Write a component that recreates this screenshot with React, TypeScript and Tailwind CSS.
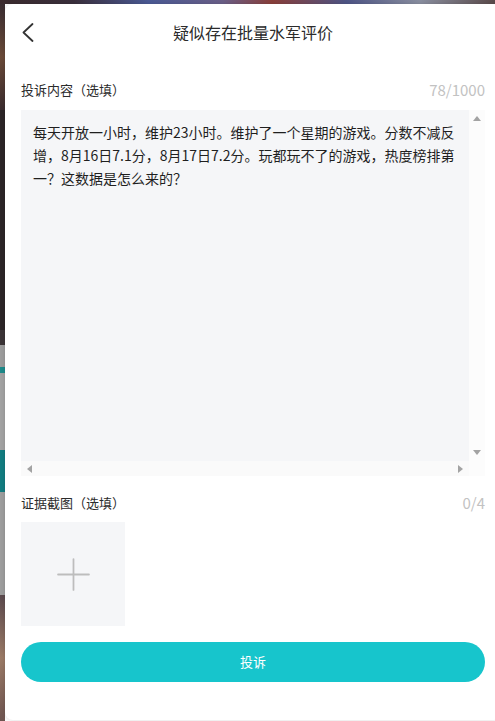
import { Plus } from 'lucide-react';

const font = { fontFamily: '"Noto Sans CJK SC", "Noto Sans", sans-serif' };

function Backdrop() {
  // blurred app screen peeking out behind the sheet
  return (
    <div className="absolute inset-0 flex flex-col">
      <div className="h-[4px] bg-[linear-gradient(90deg,#3b2b2e_0%,#3a2f3c_15%,#4b5a95_30%,#6a5f88_45%,#8a3f3a_55%,#4e5586_70%,#8a8fa0_85%,#5a4a4a_100%)]" />
      <div className="flex w-[5px] flex-1 flex-col">
        <div className="h-[106px] bg-[linear-gradient(180deg,#3a2d31,#6a4a38,#3a2b2e)]" />
        <div className="h-[220px] bg-[#2b2527]" />
        <div className="h-[15px] bg-[#3b3436]" />
        <div className="h-[22px] bg-[#9c9c9c]" />
        <div className="h-[6px] bg-[#1d8a8a]" />
        <div className="h-[77px] bg-[#a2a2a2]" />
        <div className="h-[42px] bg-[#127c80]" />
        <div className="h-[103px] bg-[#9d9d9d]" />
        <div className="flex-1 bg-[linear-gradient(180deg,#5b4a4e,#9b7a66,#6d5450)]" />
      </div>
    </div>
  );
}

function ScrollArrow({ dir }: { dir: 'up' | 'down' | 'left' | 'right' }) {
  const pts = {
    up: '0,5 4,0 8,5',
    down: '0,0 8,0 4,5',
    left: '5,0 5,8 0,4',
    right: '0,0 0,8 5,4',
  }[dir];
  const vertical = dir === 'up' || dir === 'down';
  return (
    <svg width={vertical ? 8 : 5} height={vertical ? 5 : 8} viewBox={vertical ? '0 0 8 5' : '0 0 5 8'}>
      <polygon points={pts} fill="#a3a3a3" />
    </svg>
  );
}

export default function App() {
  return (
    <div className="relative h-[721px] w-[495px] overflow-hidden" style={font}>
      <Backdrop />
      <div className="absolute left-[5px] top-[4px] flex h-[716px] w-[496px] flex-col rounded-[8px] bg-white px-4 shadow-[0_0_4px_rgba(0,0,0,0.15)]">
        <div className="relative flex h-14 shrink-0 items-center justify-center">
          <svg className="absolute left-[1px] top-[19px]" width="12" height="19" viewBox="0 0 12 19" fill="none">
            <polyline points="10.5,1 1.5,9.5 10.5,18" stroke="#333" strokeWidth="1.8" strokeLinecap="round" strokeLinejoin="round" />
          </svg>
          <span className="text-[16px] text-[#2b2b2b]">疑似存在批量水军评价</span>
        </div>

        <div className="mt-5 flex h-5 items-center justify-between">
          <span className="text-[13px] text-[#2b2b2b]">投诉内容（选填）</span>
          <span className="text-[15px] text-[#c2c2c2]">78/1000</span>
        </div>

        <div className="mt-[10px] flex h-[366px] flex-col">
          <div className="flex flex-1">
            <div className="flex-1 bg-[#f5f6f8] px-3 pt-[11px] text-[14px] leading-[23px] whitespace-nowrap text-[#1f1f1f]">
              每天开放一小时，维护23小时。维护了一个星期的游戏。分数不减反
              <br />
              增，8月16日7.1分，8月17日7.2分。玩都玩不了的游戏，热度榜排第
              <br />
              一？这数据是怎么来的？
            </div>
            <div className="flex w-[16px] flex-col items-center justify-between bg-[#fcfcfc] py-[6px]">
              <ScrollArrow dir="up" />
              <ScrollArrow dir="down" />
            </div>
          </div>
          <div className="flex h-[15px]">
            <div className="flex flex-1 items-center justify-between bg-[#fafafa] px-[6px]">
              <ScrollArrow dir="left" />
              <ScrollArrow dir="right" />
            </div>
            <div className="w-[16px] bg-[#fcfcfc]" />
          </div>
        </div>

        <div className="mt-[17px] flex h-5 items-center justify-between">
          <span className="text-[13px] text-[#2b2b2b]">证据截图（选填）</span>
          <span className="text-[15px] text-[#c2c2c2]">0/4</span>
        </div>

        <div className="mt-[9px] flex h-[104px] w-[104px] items-center justify-center bg-[#f5f6f8]">
          <Plus size={53} strokeWidth={0.8} color="#bdbdbd" />
        </div>

        <button className="mt-4 flex h-10 w-full items-center justify-center rounded-full bg-[#17c5cc] text-[13px] text-white">
          投诉
        </button>
      </div>
    </div>
  );
}
